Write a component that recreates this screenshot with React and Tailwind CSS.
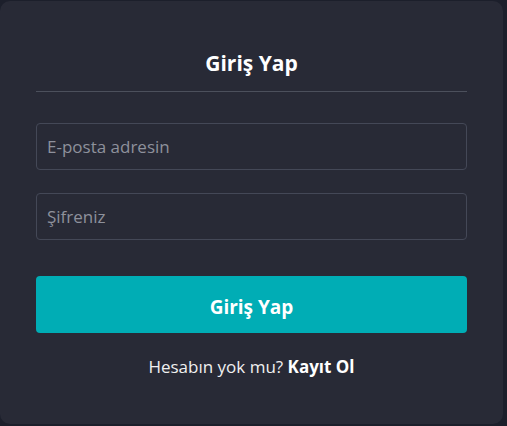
import React from 'react';

const App = () => {
  return (
    <div className="w-[507px] h-[426px] bg-[#1c1f2b] pt-px" style={{ fontFamily: '"Open Sans", "Noto Sans", sans-serif' }}>
      <div className="w-[503px] h-[423px] bg-[#282a36] rounded-[10px] px-9 pt-[44px]">
        <h2 className="text-center text-white text-[21px] font-bold leading-[36px]">Giriş Yap</h2>
        <div className="mt-[10px] h-px bg-[#4c505c]" />
        <form className="mt-[31px] flex flex-col" onSubmit={(e) => e.preventDefault()}>
          <input
            type="email"
            placeholder="E-posta adresin"
            className="h-[47px] w-full rounded-[4px] border border-[#444857] bg-transparent px-[10px] text-[17px] text-white placeholder:text-[#8e919c] outline-none"
          />
          <input
            type="password"
            placeholder="Şifreniz"
            className="mt-[23px] h-[47px] w-full rounded-[4px] border border-[#444857] bg-transparent px-[10px] text-[17px] text-white placeholder:text-[#8e919c] outline-none"
          />
          <button
            type="submit"
            className="mt-[36px] h-[57px] w-full rounded-[4px] bg-[#00adb5] pt-[5px] text-white text-[19px] font-bold"
          >
            Giriş Yap
          </button>
        </form>
        <p className="mt-[21px] text-center text-[17px] text-[#f0f0f0]">
          Hesabın yok mu? <span className="font-bold text-white cursor-pointer">Kayıt Ol</span>
        </p>
      </div>
    </div>
  );
};

export default App;
